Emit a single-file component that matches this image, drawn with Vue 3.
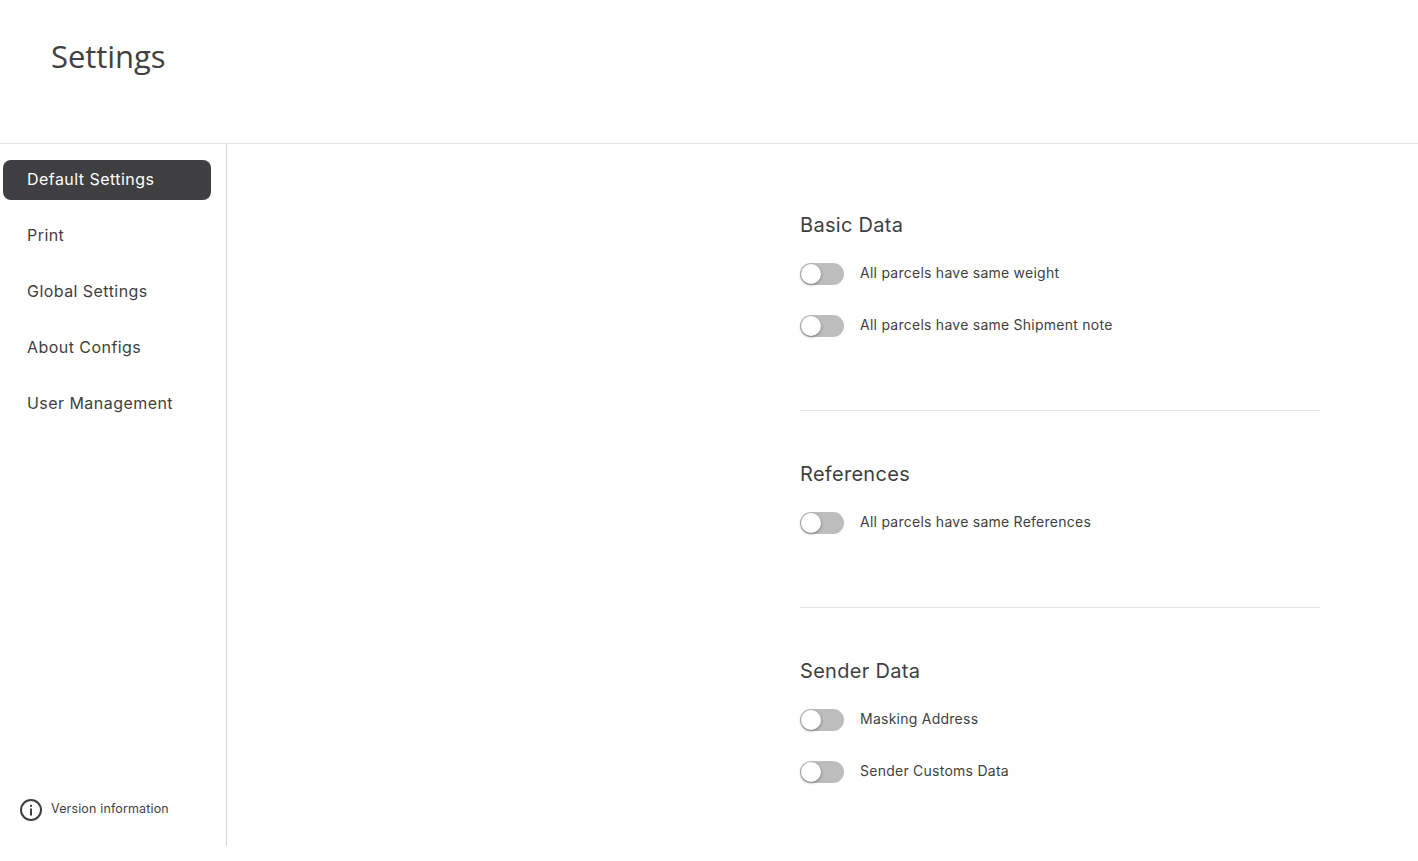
<script setup>
const nav = ['Default Settings', 'Print', 'Global Settings', 'About Configs', 'User Management']
const sections = [
  { title: 'Basic Data', items: ['All parcels have same weight', 'All parcels have same Shipment note'] },
  { title: 'References', items: ['All parcels have same References'] },
  { title: 'Sender Data', items: ['Masking Address', 'Sender Customs Data'] },
]
</script>

<template>
  <div class="page">
    <header class="header"><h1>Settings</h1></header>
    <div class="body">
      <aside class="sidebar">
        <nav class="nav">
          <a v-for="(n, i) in nav" :key="n" class="nav-item" :class="{ active: i === 0 }">{{ n }}</a>
        </nav>
        <div class="version">
          <svg width="24" height="24" viewBox="0 0 24 24" fill="none">
            <circle cx="12" cy="12" r="10" stroke="#3f3f41" stroke-width="2" />
            <rect x="11" y="10.5" width="2" height="7" fill="#3f3f41" />
            <rect x="11" y="6.8" width="2" height="2" fill="#3f3f41" />
          </svg>
          <span>Version information</span>
        </div>
      </aside>
      <main class="main">
        <div class="content">
          <section v-for="s in sections" :key="s.title" class="section">
            <h2>{{ s.title }}</h2>
            <div class="rows">
              <div v-for="item in s.items" :key="item" class="row">
                <span class="toggle"><span class="knob"></span></span>
                <span class="label">{{ item }}</span>
              </div>
            </div>
          </section>
        </div>
      </main>
    </div>
  </div>
</template>

<style scoped>
.page { height: 846px; overflow: hidden; display: flex; flex-direction: column; background: #fff; color: #3f3f41; font-family: Inter, sans-serif; }
.header { height: 143px; border-bottom: 1px solid #e4e4e4; padding-left: 51px; }
h1 { margin: 0; padding-top: 34px; font: 400 31px/44px "Open Sans", sans-serif; color: #414143; letter-spacing: -0.05px; }
.body { flex: 1; display: flex; min-height: 0; }
.sidebar { width: 208px; border-right: 1px solid #d6d6d6; display: flex; flex-direction: column; justify-content: space-between; padding: 16px 15px 24px 3px; }
.nav { display: flex; flex-direction: column; gap: 16px; }
.nav-item { height: 40px; padding-left: 24px; padding-bottom: 2px; box-sizing: border-box; border-radius: 8px; display: flex; align-items: center; font: 400 16px/24px Inter, sans-serif; letter-spacing: 0.45px; color: #3f3f41; }
.nav-item.active { background: #3f3f41; color: #fff; }
.version { display: flex; align-items: center; gap: 8px; margin-left: 16px; font: 400 12.5px/18px Inter, sans-serif; letter-spacing: 0.15px; }
.version span { padding-bottom: 2px; }
.main { flex: 1; display: flex; padding-left: 573px; }
.content { width: 520px; }
.section { padding: 51px 0 73px; border-bottom: 1px solid #e4e4e4; }
.section:first-child { padding-top: 69px; }
.section:last-child { border-bottom: 0; }
h2 { margin: 0 0 26px; font: 400 20px/24px Inter, sans-serif; letter-spacing: 0.3px; color: #3f3f41; }
.rows { display: flex; flex-direction: column; gap: 30px; }
.row { display: flex; align-items: center; gap: 16px; height: 22px; }
.toggle { width: 44px; height: 22px; border-radius: 11px; background: #bdbdbd; position: relative; display: block; }
.knob { position: absolute; left: 1px; top: 1px; width: 20px; height: 20px; border-radius: 50%; background: #fff; box-shadow: 0 1px 3px rgba(0,0,0,.4); }
.label { font: 400 14px/20px Inter, sans-serif; letter-spacing: 0.25px; color: #3f3f41; padding-bottom: 2px; }
</style>
